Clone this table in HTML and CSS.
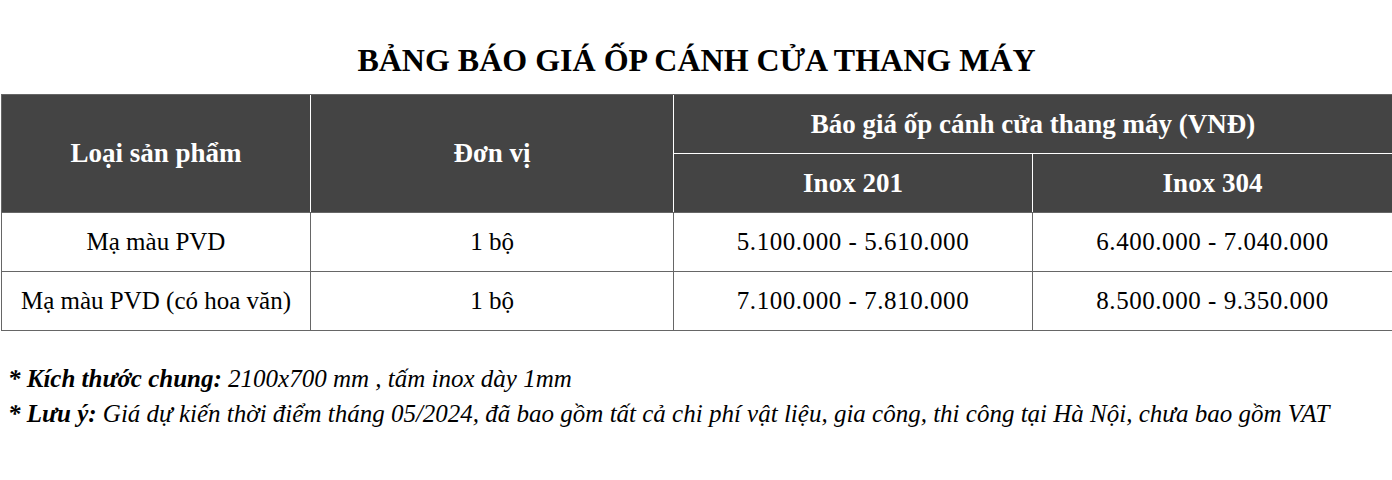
FILE: index.html
```html
<!DOCTYPE html>
<html lang="vi">
<head>
<meta charset="utf-8">
<title>Bảng báo giá ốp cánh cửa thang máy</title>
<link rel="stylesheet" href="styles.css">
</head>
<body>
<div class="page">
  <h1 class="title">BẢNG BÁO GIÁ ỐP CÁNH CỬA THANG MÁY</h1>
  <table class="price">
    <colgroup>
      <col class="c1"><col class="c2"><col class="c3"><col class="c4">
    </colgroup>
    <thead>
      <tr>
        <th rowspan="2" class="h-first">Loại sản phẩm</th>
        <th rowspan="2">Đơn vị</th>
        <th colspan="2" class="h-group h-last">Báo giá ốp cánh cửa thang máy (VNĐ)</th>
      </tr>
      <tr>
        <th class="h-sub">Inox 201</th>
        <th class="h-sub h-last">Inox 304</th>
      </tr>
    </thead>
    <tbody>
      <tr>
        <td>Mạ màu PVD</td>
        <td>1 bộ</td>
        <td class="num">5.100.000 - 5.610.000</td>
        <td class="num last">6.400.000 - 7.040.000</td>
      </tr>
      <tr>
        <td>Mạ màu PVD (có hoa văn)</td>
        <td>1 bộ</td>
        <td class="num">7.100.000 - 7.810.000</td>
        <td class="num last">8.500.000 - 9.350.000</td>
      </tr>
    </tbody>
  </table>
  <div class="notes">
    <p class="note"><b>* Kích thước chung:</b> 2100x700 mm , tấm inox dày 1mm</p>
    <p class="note"><b>* Lưu ý:</b> Giá dự kiến thời điểm tháng 05/2024, đã bao gồm tất cả chi phí vật liệu, gia công, thi công tại Hà Nội, chưa bao gồm VAT</p>
  </div>
</div>
</body>
</html>
```
FILE: styles.css
```css
html, body {
  margin: 0;
  padding: 0;
  background: #ffffff;
}
body {
  font-family: "Liberation Serif", "Times New Roman", serif;
  color: #000;
}
.page {
  width: 1392px;
  padding: 0 0 0 1px;
  box-sizing: border-box;
}
.title {
  margin: 0 0 14px 0;
  padding-top: 40px;
  line-height: 40px;
  font-size: 32px;
  font-weight: bold;
  text-align: center;
  color: #000;
}
.price {
  width: 1390px;
  border-collapse: separate;
  border-spacing: 0;
  table-layout: fixed;
  border: 1px solid #666;
}
.c1 { width: 309px; }
.c2 { width: 363px; }
.c3 { width: 359px; }
.c4 { width: 359px; }
.price th {
  background: #444;
  color: #fff;
  font-size: 27px;
  font-weight: bold;
  height: 58px;
  padding: 0;
  text-align: center;
  vertical-align: middle;
  border-right: 1px solid #fff;
  border-bottom: 1px solid #fff;
}
.price th.h-last { border-right: none; }
.price thead tr:first-child th[rowspan] { border-bottom: none; }
.price th.h-sub { border-bottom: none; }
.price td {
  font-size: 25px;
  height: 58px;
  padding: 0;
  text-align: center;
  vertical-align: middle;
  border-top: 1px solid #666;
  border-right: 1px solid #666;
}
.price td.num { letter-spacing: 0.55px; }
.price td.last { border-right: none; }
.notes {
  margin-top: 30px;
  padding-left: 7px;
}
.note {
  margin: 0;
  font-size: 25px;
  line-height: 35px;
  font-style: italic;
}
.note b { font-weight: bold; }
```
